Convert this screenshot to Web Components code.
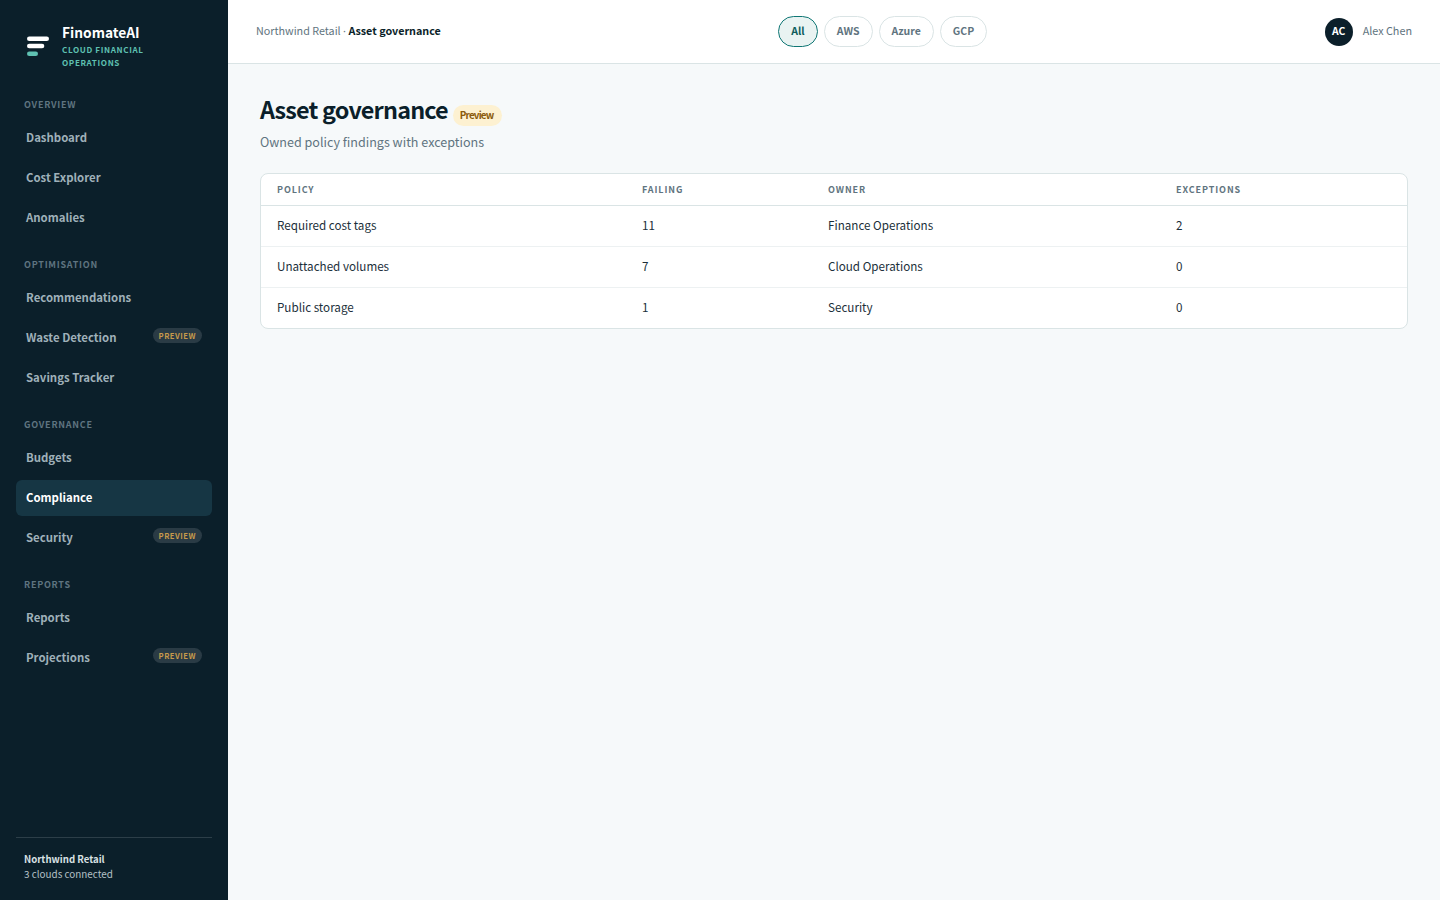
<!DOCTYPE html>
<html lang="en">
<head>
<meta charset="utf-8">
<title>Asset governance</title>
<style>
  html, body {
    margin: 0;
    height: 100%;
  }
  body {
    font-family: "Noto Sans CJK SC", "Noto Sans", sans-serif;
    background: #f6f9fa;
  }
</style>
</head>
<body>
<app-shell>
  <side-bar slot="side">
    <nav-group label="Overview">
      <nav-item>Dashboard</nav-item>
      <nav-item>Cost Explorer</nav-item>
      <nav-item>Anomalies</nav-item>
    </nav-group>
    <nav-group label="Optimisation">
      <nav-item>Recommendations</nav-item>
      <nav-item preview>Waste Detection</nav-item>
      <nav-item>Savings Tracker</nav-item>
    </nav-group>
    <nav-group label="Governance">
      <nav-item>Budgets</nav-item>
      <nav-item active>Compliance</nav-item>
      <nav-item preview>Security</nav-item>
    </nav-group>
    <nav-group label="Reports">
      <nav-item>Reports</nav-item>
      <nav-item preview>Projections</nav-item>
    </nav-group>
  </side-bar>
  <top-bar slot="top"></top-bar>
  <page-head title="Asset governance" subtitle="Owned policy findings with exceptions"></page-head>
  <data-table>
    <table-row head><span>Policy</span><span>Failing</span><span>Owner</span><span>Exceptions</span></table-row>
    <table-row><span>Required cost tags</span><span>11</span><span>Finance Operations</span><span>2</span></table-row>
    <table-row><span>Unattached volumes</span><span>7</span><span>Cloud Operations</span><span>0</span></table-row>
    <table-row><span>Public storage</span><span>1</span><span>Security</span><span>0</span></table-row>
  </data-table>
</app-shell>

<script>
class AppShell extends HTMLElement {
  constructor() {
    super();
    this.attachShadow({mode: 'open'});
    this.shadowRoot.innerHTML = `
<style>
  :host {
    display: grid;
    grid-template-columns: 228px 1fr;
    grid-template-rows: 64px 1fr;
    height: 900px;
    overflow: hidden;
  }
  ::slotted([slot=side]) {
    grid-row: 1 / 3;
  }
  main {
    padding: 32px;
    min-width: 0;
  }
</style>
<slot name="side"></slot>
<slot name="top"></slot>
<main><slot></slot></main>`;
  }
}

class SideBar extends HTMLElement {
  constructor() {
    super();
    this.attachShadow({mode: 'open'});
    this.shadowRoot.innerHTML = `
<style>
  :host {
    display: flex;
    flex-direction: column;
    box-sizing: border-box;
    height: 900px;
    padding: 0 16px;
    background: #0b1f2a;
  }
  .brand {
    display: flex;
    align-items: flex-start;
    gap: 13px;
    box-sizing: border-box;
    height: 96px;
    padding: 22px 0 0 11px;
  }
  .brand svg {
    flex: none;
    margin-top: 14px;
  }
  .name {
    font-size: 13.75px;
    line-height: 20px;
    font-weight: 700;
    color: #fff;
  }
  .tag {
    font-size: 8.1px;
    line-height: 13px;
    font-weight: 700;
    letter-spacing: 0.63px;
    color: #5fc1b2;
    text-transform: uppercase;
    margin-top: 0.5px;
    width: 100px;
  }
  .groups {
    flex: 1;
    display: flex;
    flex-direction: column;
    gap: 20px;
  }
  .foot {
    border-top: 1px solid #2c3e48;
    height: 63px;
    box-sizing: border-box;
    padding: 14px 8px 0;
    font-size: 9.9px;
    line-height: 15px;
    color: #b4c0c6;
  }
  .foot b {
    display: block;
    font-size: 9.6px;
    font-weight: 700;
    color: #d9e1e4;
  }
</style>
<div class="brand">
  <svg width="22" height="20" viewBox="0 0 22 20">
    <rect x="0" y="0.5" width="22" height="4.5" rx="2.25" fill="#fff"/>
    <rect x="0" y="7.7" width="17.3" height="4.5" rx="2.25" fill="#fff"/>
    <rect x="0" y="15.5" width="11" height="4.5" rx="2.25" fill="#5fc1b2"/>
  </svg>
  <div>
    <div class="name">FinomateAI</div>
    <div class="tag">Cloud financial operations</div>
  </div>
</div>
<div class="groups"><slot></slot></div>
<div class="foot"><b>Northwind Retail</b>3 clouds connected</div>`;
  }
}

class NavGroup extends HTMLElement {
  constructor() {
    super();
    this.attachShadow({mode: 'open'});
    this.shadowRoot.innerHTML = `
<style>
  :host {
    display: flex;
    flex-direction: column;
    gap: 4px;
  }
  h2 {
    margin: 0 0 4px;
    padding: 0 8px;
    height: 16px;
    font-size: 9px;
    line-height: 18px;
    font-weight: 700;
    letter-spacing: 0.75px;
    text-transform: uppercase;
    color: #5f7480;
  }
</style>
<h2></h2>
<slot></slot>`;
  }

  connectedCallback() {
    this.shadowRoot.querySelector('h2').textContent = this.getAttribute('label');
  }
}

class NavItem extends HTMLElement {
  constructor() {
    super();
    this.attachShadow({mode: 'open'});
    this.shadowRoot.innerHTML = `
<style>
  :host {
    display: flex;
    align-items: center;
    justify-content: space-between;
    box-sizing: border-box;
    height: 36px;
    padding: 0 10px 2px;
    border-radius: 6px;
    font-size: 11.4px;
    line-height: 18px;
    font-weight: 600;
    color: #9fb0b9;
  }
  :host([active]) {
    background: #163644;
    color: #fff;
  }
  .badge {
    display: none;
    height: 15px;
    padding: 0 6px;
    border-radius: 8px;
    background: #2a3b45;
    color: #c79a4b;
    font-size: 7.65px;
    line-height: 15px;
    font-weight: 700;
    letter-spacing: 0.5px;
    margin-top: -3px;
  }
  :host([preview]) .badge {
    display: block;
  }
</style>
<slot></slot>
<span class="badge">PREVIEW</span>`;
  }
}

class TopBar extends HTMLElement {
  constructor() {
    super();
    this.attachShadow({mode: 'open'});
    this.shadowRoot.innerHTML = `
<style>
  :host {
    display: flex;
    justify-content: space-between;
    align-items: center;
    box-sizing: border-box;
    height: 64px;
    padding: 0 28px;
    background: #fff;
    border-bottom: 1px solid #dae4e5;
  }
  .crumb {
    font-size: 10.75px;
    line-height: 16px;
    color: #5f7480;
    margin-top: -2px;
  }
  .crumb i {
    font-style: normal;
    font-family: "Noto Sans", sans-serif;
  }
  .crumb b {
    font-weight: 700;
    color: #0b1f2a;
  }
  .pills {
    display: flex;
    gap: 6px;
  }
  .pill {
    height: 31px;
    box-sizing: border-box;
    padding: 0 12px;
    border: 1px solid #dae4e5;
    border-radius: 16px;
    font-size: 10.5px;
    line-height: 28px;
    font-weight: 600;
    color: #5f7480;
    background: #fff;
  }
  .pill.on {
    background: #e9f3f2;
    border-color: #0f7674;
    color: #0d5c5c;
  }
  .user {
    display: flex;
    align-items: center;
    gap: 10px;
    font-size: 10.8px;
    line-height: 16px;
    color: #5f7480;
  }
  .user span:last-child {
    margin-top: -3px;
  }
  .avatar {
    width: 28px;
    height: 28px;
    border-radius: 50%;
    background: #0b1f2a;
    color: #fff;
    font-size: 10.4px;
    line-height: 26px;
    font-weight: 700;
    text-align: center;
  }
</style>
<div class="crumb">Northwind Retail <i>·</i> <b>Asset governance</b></div>
<div class="pills">
  <span class="pill on">All</span>
  <span class="pill">AWS</span>
  <span class="pill">Azure</span>
  <span class="pill">GCP</span>
</div>
<div class="user"><span class="avatar">AC</span><span>Alex Chen</span></div>`;
  }
}

class PageHead extends HTMLElement {
  constructor() {
    super();
    this.attachShadow({mode: 'open'});
    this.shadowRoot.innerHTML = `
<style>
  :host {
    display: block;
    margin-bottom: 21px;
  }
  .row {
    display: flex;
    align-items: center;
    gap: 5px;
    height: 30px;
    letter-spacing: -0.83px;
  }
  h1 {
    margin: 0 0 4px;
    font-size: 23.4px;
    line-height: 30px;
    font-weight: 700;
    letter-spacing: inherit;
    color: #0b1f2a;
  }
  .badge {
    height: 21px;
    padding: 0 9px 0 7px;
    border-radius: 11px;
    background: #fdf1d1;
    color: #8a5a0b;
    font-size: 9.9px;
    line-height: 21px;
    font-weight: 700;
    margin-top: 9px;
  }
  p {
    margin: 6px 0 0;
    font-size: 12.55px;
    line-height: 20px;
    color: #5f7480;
  }
</style>
<div class="row"><h1></h1><span class="badge">Preview</span></div>
<p></p>`;
  }

  connectedCallback() {
    this.shadowRoot.querySelector('h1').textContent = this.getAttribute('title');
    this.shadowRoot.querySelector('p').textContent = this.getAttribute('subtitle');
  }
}

class DataTable extends HTMLElement {
  constructor() {
    super();
    this.attachShadow({mode: 'open'});
    this.shadowRoot.innerHTML = `
<style>
  :host {
    display: block;
    background: #fff;
    border: 1px solid #dae4e5;
    border-radius: 8px;
    overflow: hidden;
  }
</style>
<slot></slot>`;
  }
}

class TableRow extends HTMLElement {
  constructor() {
    super();
    this.attachShadow({mode: 'open'});
    this.shadowRoot.innerHTML = `
<style>
  :host {
    display: grid;
    grid-template-columns: 365px 186px 348px 1fr;
    align-items: center;
    height: 41px;
    box-sizing: border-box;
    padding-bottom: 2px;
    border-bottom: 1px solid #edf1f2;
    font-size: 11.65px;
    line-height: 18px;
    color: #1b2f3a;
  }
  :host(:last-child) {
    height: 40px;
    border-bottom: 0;
  }
  :host([head]) {
    height: 32px;
    padding-bottom: 0;
    border-bottom: 1px solid #dae4e5;
    font-size: 9px;
    font-weight: 700;
    letter-spacing: 0.9px;
    text-transform: uppercase;
    color: #5f7480;
  }
  ::slotted(span) {
    padding: 0 16px;
  }
</style>
<slot></slot>`;
  }
}

customElements.define('app-shell', AppShell);
customElements.define('side-bar', SideBar);
customElements.define('nav-group', NavGroup);
customElements.define('nav-item', NavItem);
customElements.define('top-bar', TopBar);
customElements.define('page-head', PageHead);
customElements.define('data-table', DataTable);
customElements.define('table-row', TableRow);
</script>
</body>
</html>
